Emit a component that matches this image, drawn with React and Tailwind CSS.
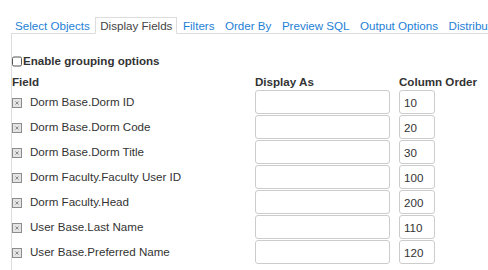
import React from "react";

const tabs = [
  "Select Objects",
  "Display Fields",
  "Filters",
  "Order By",
  "Preview SQL",
  "Output Options",
  "Distribution",
];

const rows = [
  ["Dorm Base.Dorm ID", "10"],
  ["Dorm Base.Dorm Code", "20"],
  ["Dorm Base.Dorm Title", "30"],
  ["Dorm Faculty.Faculty User ID", "100"],
  ["Dorm Faculty.Head", "200"],
  ["User Base.Last Name", "110"],
  ["User Base.Preferred Name", "120"],
];

function XBox() {
  return (
    <svg width="10" height="10" viewBox="0 0 10 10" className="shrink-0 translate-y-[1px]">
      <rect x="0.5" y="0.5" width="9" height="9" fill="#e4e4e4" stroke="#8c8c8c" />
      <path d="M3.5 3.5 L6.5 6.5 M6.5 3.5 L3.5 6.5" stroke="#8a8a8a" strokeWidth="1" />
    </svg>
  );
}

export default function App() {
  return (
    <div
      className="w-[488px] h-[270px] overflow-hidden bg-white text-[11.6px] text-[#333]"
      style={{ fontFamily: '"Liberation Sans", Arial, sans-serif' }}
    >
      <div className="ml-[11px] pt-[17px]">
        <div className="flex border-b border-[#dddddd] whitespace-nowrap">
          {tabs.map((t, i) => (
            <div
              key={t}
              className={
                i === 1
                  ? "relative -mb-px h-[17px] leading-[15px] px-[4px] mr-[0.5px] border border-[#dddddd] border-b-white bg-white text-[#444]"
                  : "relative -mb-px h-[17px] leading-[15px] px-[4px] mr-[0.5px] border border-transparent text-[#1d7fd6] " +
                    (i === 0 ? "-ml-px" : "")
              }
            >
              {t}
            </div>
          ))}
        </div>
        <div className="border-l border-[#dddddd] pt-[20px] h-[240px]">
          <label className="flex items-center h-[14px] leading-[14px] font-bold">
            <input
              type="checkbox"
              className="appearance-none m-0 w-[10px] h-[10px] border border-[#555] rounded-[2px] bg-white translate-y-[0.5px]"
            />
            <span className="ml-px">Enable grouping options</span>
          </label>
          <div className="grid grid-cols-[243px_144px_1fr] mt-[7px] h-[14px] leading-[14px] font-bold">
            <div>Field</div>
            <div>Display As</div>
            <div>Column Order</div>
          </div>
          <div className="mt-[1px] flex flex-col">
            {rows.map(([name, order]) => (
              <div key={name} className="grid grid-cols-[243px_144px_1fr] h-[25px]">
                <div className="flex items-center h-[24px] gap-[8px]">
                  <XBox />
                  <span>{name}</span>
                </div>
                <div>
                  <input
                    type="text"
                    className="block w-[135px] h-[24px] border border-[#cccccc] rounded-[3px] px-[4px] bg-white outline-none"
                  />
                </div>
                <div>
                  <input
                    type="text"
                    defaultValue={order}
                    className="block w-[36px] h-[24px] border border-[#cccccc] rounded-[3px] px-[4px] bg-white outline-none text-[#333] text-[11.6px]"
                    style={{ fontFamily: '"Liberation Sans", Arial, sans-serif' }}
                  />
                </div>
              </div>
            ))}
          </div>
        </div>
      </div>
    </div>
  );
}
